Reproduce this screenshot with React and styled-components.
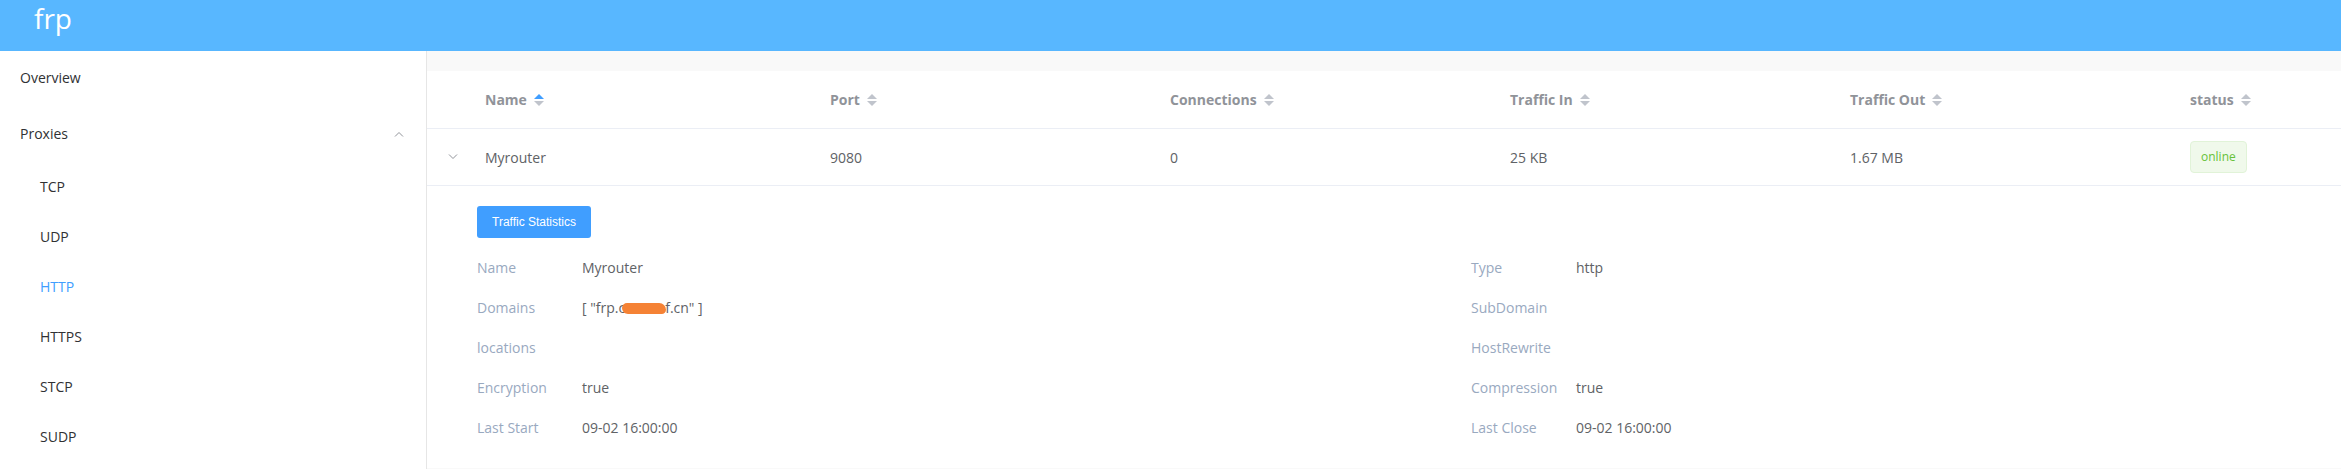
import React from "react";
import styled, { createGlobalStyle } from "styled-components";

const GlobalStyle = createGlobalStyle`
    body {
        margin: 0;
        width: 2341px;
        height: 469px;
        overflow: hidden;
        font-family: "Open Sans", "Noto Sans", sans-serif;
        background: #fff;
    }
`;

const columns = ["Name", "Port", "Connections", "Traffic In", "Traffic Out", "status"];

const proxy = {
    name: "Myrouter",
    port: "9080",
    conns: "0",
    trafficIn: "25 KB",
    trafficOut: "1.67 MB",
    status: "online",
};

const leftFields = [
    ["Name", "Myrouter"],
    ["Domains", "domains"],
    ["locations", ""],
    ["Encryption", "true"],
    ["Last Start", "09-02 16:00:00"],
];

const rightFields = [
    ["Type", "http"],
    ["SubDomain", ""],
    ["HostRewrite", ""],
    ["Compression", "true"],
    ["Last Close", "09-02 16:00:00"],
];

const subMenu = ["TCP", "UDP", "HTTP", "HTTPS", "STCP", "SUDP"];

const SortCaret = ({ active }) => (
    <svg width="10" height="14" viewBox="0 0 10 14">
        <path d="M0 6 L5 1 L10 6 Z" fill={active ? "#409eff" : "#c0c4cc"} />
        <path d="M0 8 L5 13 L10 8 Z" fill="#c0c4cc" />
    </svg>
);

const Chevron = ({ up }) => (
    <svg width="10" height="6" viewBox="0 0 10 6">
        <polyline
            points={up ? "1,5.5 5,1.5 9,5.5" : "1,0.5 5,4.5 9,0.5"}
            fill="none"
            stroke="#909399"
            strokeWidth="1"
        />
    </svg>
);

const App = () => {
    const renderValue = (label, value) => {
        if (label === "Domains") {
            // domain is scribbled out in the screenshot
            return (
                <span>
                    [ "frp.c
                    <Redacted />
                    f.cn" ]
                </span>
            );
        }
        return <span>{value}</span>;
    };

    return (
        <Page>
            <GlobalStyle />
            <Header>
                <Logo>frp</Logo>
            </Header>
            <Body>
                <Sidebar>
                    <MenuItem>Overview</MenuItem>
                    <MenuItem>
                        Proxies
                        <Chevron up />
                    </MenuItem>
                    {subMenu.map((item) => (
                        <SubItem key={item} active={item === "HTTP"}>
                            {item}
                        </SubItem>
                    ))}
                </Sidebar>
                <Main>
                    <Table>
                        <HeadRow>
                            <ExpandCell />
                            {columns.map((col, index) => (
                                <HeadCell key={col} first={index === 0}>
                                    {col}
                                    <SortCaret active={index === 0} />
                                </HeadCell>
                            ))}
                        </HeadRow>
                        <Row>
                            <ExpandCell>
                                <Chevron />
                            </ExpandCell>
                            <Cell first>{proxy.name}</Cell>
                            <Cell>{proxy.port}</Cell>
                            <Cell>{proxy.conns}</Cell>
                            <Cell>{proxy.trafficIn}</Cell>
                            <Cell>{proxy.trafficOut}</Cell>
                            <Cell>
                                <Tag>{proxy.status}</Tag>
                            </Cell>
                        </Row>
                        <Expanded>
                            <Button>Traffic Statistics</Button>
                            <Form>
                                <FormColumn>
                                    {leftFields.map(([label, value]) => (
                                        <FormItem key={label}>
                                            <Label>{label}</Label>
                                            {renderValue(label, value)}
                                        </FormItem>
                                    ))}
                                </FormColumn>
                                <FormColumn>
                                    {rightFields.map(([label, value]) => (
                                        <FormItem key={label}>
                                            <Label>{label}</Label>
                                            {renderValue(label, value)}
                                        </FormItem>
                                    ))}
                                </FormColumn>
                            </Form>
                        </Expanded>
                    </Table>
                </Main>
            </Body>
        </Page>
    );
};

export default App;

const Page = styled.div`
    display: flex;
    flex-direction: column;
    height: 469px;
`;

const Header = styled.div`
    height: 51px;
    background: #58b7ff;
    display: flex;
    align-items: flex-start;
    padding-left: 34px;
    flex-shrink: 0;
`;

const Logo = styled.div`
    color: #fff;
    font-size: 28px;
    line-height: 1;
    margin-top: 4px;
`;

const Body = styled.div`
    display: flex;
    flex: 1;
    min-height: 0;
`;

const Sidebar = styled.div`
    width: 426px;
    flex-shrink: 0;
    border-right: 1px solid #e6e6e6;
`;

const MenuItem = styled.div`
    height: 56px;
    display: flex;
    align-items: center;
    justify-content: space-between;
    padding: 0 22px 3px 20px;
    box-sizing: border-box;
    font-size: 14px;
    color: #303133;
`;

const SubItem = styled.div`
    height: 50px;
    display: flex;
    align-items: center;
    padding: 0 0 3px 40px;
    box-sizing: border-box;
    font-size: 14px;
    color: ${(props) => (props.active ? "#409eff" : "#303133")};
`;

const Main = styled.div`
    flex: 1;
    min-width: 0;
    overflow: hidden;
    padding-top: 20px;
    background: #f9f9f9;
`;

const Table = styled.div`
    width: 2093px;
    background: #fff;
`;

const HeadRow = styled.div`
    display: flex;
    height: 57px;
    border-bottom: 1px solid #ebeef5;
`;

const Row = styled.div`
    display: flex;
    height: 56px;
    border-bottom: 1px solid #ebeef5;
`;

const ExpandCell = styled.div`
    width: 48px;
    flex-shrink: 0;
    display: flex;
    align-items: center;
    justify-content: center;
    padding-left: 4px;
    box-sizing: border-box;
`;

const HeadCell = styled.div`
    width: ${(props) => (props.first ? "345px" : "340px")};
    flex-shrink: 0;
    display: flex;
    align-items: center;
    gap: 7px;
    padding-left: 10px;
    box-sizing: border-box;
    font-size: 14px;
    font-weight: bold;
    color: #909399;
`;

const Cell = styled.div`
    width: ${(props) => (props.first ? "345px" : "340px")};
    flex-shrink: 0;
    display: flex;
    align-items: center;
    padding-left: 10px;
    box-sizing: border-box;
    font-size: 14px;
    color: #606266;
`;

const Tag = styled.span`
    display: inline-block;
    height: 32px;
    line-height: 30px;
    padding: 0 10px;
    box-sizing: border-box;
    font-size: 12px;
    color: #67c23a;
    background: #f0f9eb;
    border: 1px solid #e1f3d8;
    border-radius: 4px;
`;

const Expanded = styled.div`
    padding: 20px 50px;
    width: 2088px;
    box-sizing: border-box;
`;

const Button = styled.button`
    display: block;
    height: 32px;
    padding: 0 15px;
    margin-bottom: 10px;
    border: none;
    border-radius: 3px;
    background: #409eff;
    color: #fff;
    font-family: "Liberation Sans", Arial, sans-serif;
    font-size: 12px;
`;

const Form = styled.div`
    display: grid;
    grid-template-columns: 1fr 1fr;
`;

const FormColumn = styled.div`
    display: flex;
    flex-direction: column;
`;

const FormItem = styled.div`
    display: flex;
    height: 40px;
    align-items: center;
    padding-bottom: 2px;
    box-sizing: border-box;
    font-size: 14px;
    color: #606266;
`;

const Label = styled.label`
    width: 90px;
    padding-right: 15px;
    color: #99a9bf;
`;

const Redacted = styled.span`
    display: inline-block;
    width: 44px;
    height: 11px;
    margin: 0 -1px 0 -3px;
    vertical-align: middle;
    background: #f58235;
    border-radius: 6px 8px 5px 7px;
`;
